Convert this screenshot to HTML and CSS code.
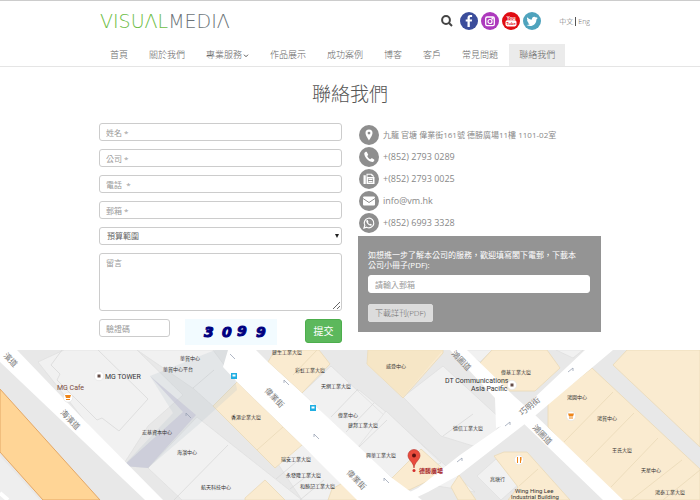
FILE: index.html
```html
<!DOCTYPE html>
<html lang="zh-Hant">
<head>
<meta charset="utf-8">
<meta name="viewport" content="width=device-width, initial-scale=1">
<title>聯絡我們</title>
<link rel="stylesheet" href="styles.css">
</head>
<body>
<header class="header">
  <div class="container topbar">
    <a class="logo" href="#" aria-label="VisualMedia"><span class="logo-green">VISUΛL</span>MEDIΛ</a>
    <div class="tools">
      <button class="search" type="button" aria-label="搜尋">
        <svg viewBox="0 0 12 12"><circle cx="5" cy="5" r="3.9"/><path d="M8 8l3 3"/></svg>
      </button>
      <div class="social">
        <a class="fb" href="#" aria-label="Facebook"><svg viewBox="0 0 18 18"><path d="M9.8 15V9.6h2l.3-2.2H9.8V6.1c0-.7.3-1 1-1h1.3V3.1c-.3 0-.9-.1-1.7-.1C8.600 3 7.500 4.100 7.500 5.800v1.600H5.700v2.200h1.800V15z"/></svg></a>
        <a class="ig" href="#" aria-label="Instagram"><svg viewBox="0 0 18 18"><rect x="4.700" y="5" width="8.600" height="8.600" rx="1.400" fill="none" stroke="#fff" stroke-width="1.300"/><circle cx="9" cy="9.500" r="2" fill="none" stroke="#fff" stroke-width="1.200"/><rect x="10.500" y="5.500" width="2" height="2"/></svg></a>
        <a class="yt" href="#" aria-label="YouTube"><svg viewBox="0 0 18 18"><text x="9" y="7.500">You</text><rect x="3.500" y="8.200" width="11" height="6.200" rx="1.800"/><text class="tube" x="9" y="13">Tube</text></svg></a>
        <a class="tw" href="#" aria-label="Twitter"><svg viewBox="0 0 18 18"><path d="M14.500 5.700l-1.100.4c.4-.3.700-.7.800-1.100l-1.300.5a2.300 2.300 0 0 0-3.900 2.100C7 7.500 5.400 6.600 4.300 5.200c-.6 1.100-.3 2.400.7 3.100l-1-.3c0 1.100.8 2 1.800 2.300l-1 .1c.3.900 1.100 1.500 2.100 1.600-.9.700-2.100 1.100-3.400 1 4.800 2.700 9.900-.3 9.900-5.500.4-.3.800-.7 1.100-1.200z"/></svg></a>
      </div>
      <div class="lang"><a href="#">中文</a><a class="eng" href="#">Eng</a></div>
    </div>
  </div>
  <nav class="container nav">
    <a href="#">首頁</a>
    <a href="#">關於我們</a>
    <a href="#">專業服務<svg class="caret" viewBox="0 0 6 4"><path d="M1 .7l2 2 2-2"/></svg></a>
    <a href="#">作品展示</a>
    <a href="#">成功案例</a>
    <a href="#">博客</a>
    <a href="#">客戶</a>
    <a href="#">常見問題</a>
    <a class="active" href="#">聯絡我們</a>
  </nav>
</header>

<main>
  <h1>聯絡我們</h1>
  <div class="container columns">
    <form class="form">
      <input class="field" type="text" placeholder="姓名 *" aria-label="姓名">
      <input class="field" type="text" placeholder="公司 *" aria-label="公司">
      <input class="field" type="tel" placeholder="電話  *" aria-label="電話">
      <input class="field" type="email" placeholder="郵箱 *" aria-label="郵箱">
      <div class="select">
        <select class="field" aria-label="預算範圍"><option>預算範圍</option></select>
      </div>
      <textarea class="field message" placeholder="留言" aria-label="留言"></textarea>
      <div class="verify">
        <input class="field code" type="text" placeholder="驗證碼" aria-label="驗證碼">
        <svg class="captcha" viewBox="0 0 92 26" role="img" aria-label="3099">
          <text x="19" y="18">3</text><text x="37" y="18">0</text><text x="52" y="17">9</text><text x="71" y="18">9</text>
        </svg>
        <button class="submit" type="submit">提交</button>
      </div>
    </form>

    <div class="info">
      <ul class="contacts">
        <li class="address"><svg viewBox="0 0 20 20"><circle cx="10" cy="10" r="10"/><path class="ink" fill-rule="evenodd" d="M10 4.500a3.500 3.500 0 0 0-3.500 3.600C6.500 10.500 10 15.500 10 15.500s3.500-5 3.500-7.400A3.500 3.500 0 0 0 10 4.500zm0 2.200a1.400 1.400 0 1 1 0 2.800 1.400 1.400 0 0 1 0-2.800z"/></svg>九龍 官塘 偉業街161號 德勝廣場11樓 1101-02室</li>
        <li><svg viewBox="0 0 20 20"><circle cx="10" cy="10" r="10"/><path class="ink" d="M6.700 4.800L5.300 6c-.4 4 4.600 9.200 8.800 9l1.200-1.500c.2-.4.100-.7-.2-.9l-2-1.300c-.3-.2-.7-.1-.9.100l-.9.900c-1.300-.5-2.600-1.900-3.100-3.200l.8-.8c.3-.3.300-.6.100-.9L7.800 5c-.3-.4-.7-.5-1.100-.2z"/></svg>+(852) 2793 0289</li>
        <li><svg viewBox="0 0 20 20"><circle cx="10" cy="10" r="10"/><path class="ink" fill-rule="evenodd" d="M4.500 6.200h2.300V15H4.500zM7.500 4.700h5.200l2 2V8h.8v7h-8zM8.500 5.700V8h5.200V7h-1.300V5.700zM9 9.500v4h5v-4z"/><path class="line" d="M9.500 10.500h4M9.500 12.500h4"/></svg>+(852) 2793 0025</li>
        <li><svg viewBox="0 0 20 20"><circle cx="10" cy="10" r="10"/><rect class="ink" x="4" y="5.500" width="12" height="9" rx="1"/><path class="fold" d="M4 7.500l6 4 6-4"/></svg>info@vm.hk</li>
        <li><svg viewBox="0 0 20 20"><circle cx="10" cy="10" r="10"/><path class="ring" d="M5 15l.8-2.700A4.800 4.800 0 1 1 7.700 14.200z"/><path class="ink" d="M8 7l-.8.800c0 2.500 2.600 5 5 4.900l.8-.9-1.500-1.100-.8.600c-.8-.3-1.400-.9-1.700-1.700l.5-.7L8.700 7z"/></svg>+(852) 6993 3328</li>
      </ul>
      <form class="brochure">
        <label for="brochure-mail">如想進一步了解本公司的服務，歡迎填寫閣下電郵，下載本<br>公司小冊子(PDF):</label>
        <input class="field" id="brochure-mail" type="email" placeholder="請輸入郵箱">
        <button class="download" type="submit">下載詳刊(PDF)</button>
      </form>
    </div>
  </div>

  <svg class="map" viewBox="0 0 700 150" role="img" aria-label="地圖">
    <rect width="700" height="150" fill="#e8e8e8"/>
    <!-- grey building plots -->
    <g fill="#f1f1f1" stroke="#dedede" stroke-width=".7">
      <path d="M64 0h73l46 45-35 31-25 39-35-40-50-63z"/>
      <path d="M137 0h76l26 35-25 22-20-18z"/>
      <path d="M148 118l49-51 105 83H182z"/>
      <path d="M330 70l29-30 27 22 89 80-82-13z"/>
      <path d="M302 43l29-27 56 52-29 29z"/>
      <path d="M358 97l28-36 55 52-39 14-10 1z"/>
      <path d="M403 47l40-31 60 55-20 28-42-13z"/>
      <path d="M276 111l25-17 60 56h-59z"/>
      <path d="M477 126l19-17 23 25-18 16z"/>
      <path d="M462 0h30l-12 12z"/><path d="M556 0h27l-10 8z"/>
    </g>
    <g fill="none" stroke="#d9d9d9" stroke-width=".8">
      <path d="M62 0L51 15l9 9-3 6 40 40 5-2 17 13 29-32-50-49M228 95l-54 55M193 38l21-18M331 67l27-28M346 82l28-29M359 97l28-27M276 129l20-17M290 139l22-17M300 150l24-20M443 86l30-22"/>
    </g>
    <!-- waterfront plot -->
    <path d="M0 39l100 111H43L0 102z" fill="#ffd596" stroke="#e4a765"/>
    <path d="M0 106l40 44H0z" fill="#eee"/><path d="M0 143l8 7" stroke="#fff" stroke-width="4"/>
    <!-- commercial plots -->
    <g fill="#faebd0" stroke="#ead9b8" stroke-width=".8">
      <path d="M237 32l-24 24 62 62 27-23z"/><path d="M257 100l26-23"/>
      <path d="M275 0h44l11 14-28 29-34-31z"/><path d="M293 25l24-25"/>
      <path d="M245 148l20-18 20 20h-40zM332 139l14-8 12 19h-30z"/>
      <path d="M368 0h75v3l-40 45-36-34z"/>
      <path d="M421 99l21 19-12 12-21 10h-18l-1-10z"/>
      <path d="M492 0h55l13 18-25 23h-33l-22-28z"/>
      <path d="M627 0h73v97l-87-82z"/>
      <path d="M548 53l44-35 108 101v31h-85l-67-73z"/>
      <path d="M564 92l49-50M586 112l48-49M611 137l47-49M631 150l51-40M663 150l37-30M494 106l10-4h23l43 48h-62l10-13zM519 136l19-17"/>
      <path d="M451 137l8-12 17 25h-18z"/>
    </g>
    <path d="M150 26l65-26h15l7 40-40 36-49 42-25-2 50-53z" fill="#b9c4cb" opacity=".24"/>
    <path d="M150 26l46 39-48 53-25-2 60-54z" fill="#c5c4d5" opacity=".65"/>
    <path d="M368 0h75l-40 47-36-32z" fill="#f3e2c0" opacity=".6"/>
    <!-- streets -->
    <g fill="#fff">
      <path d="M0 0h17l70 73 76 77h-18L0 12z"/>
      <path d="M228 0h28l12 12 34 31 90 85 30 22h-65l-55-55-65-63-14-15z"/>
      <path d="M585 0h28l-83 70-71 55-31 17-17 8h-18l25-12 42-33 36-25 20-15z"/>
      <path d="M450 0h17l48 47 17 15 91 88h-20l-83-80-24 8-1-30z"/>
    </g>
    <g class="arrows"><path d="M284 30l5 5m-5-5v3M314 84l5 5m-5-5v3M384 128l5 5m-5-5v3M457 112l5-4m0 0v3M505 76l5-4m0 0v3M568 22l5-4m0 0v3M186 63l5 5m-5-5v3M230 4l5 5"/></g>
    <g class="street">
      <text transform="translate(3 6) rotate(46)">濱道</text>
      <text transform="translate(60 63) rotate(46)">海濱道</text>
      <text transform="translate(264 41) rotate(46)">偉業街</text>
      <text transform="translate(346 123) rotate(46)">偉業街</text>
      <text transform="translate(451 4) rotate(46)">鴻圖道</text>
      <text transform="translate(532 78) rotate(46)">鴻圖道</text>
      <text transform="translate(522 66) rotate(-39)">巧明街</text>
    </g>
    <g class="places">
      <text x="180" y="10">華貿中心</text><text x="163" y="21">華貿中心平台</text>
      <text x="142" y="84">宏基資本中心</text><text x="177" y="104">海濱中心</text><text x="201" y="139">航天科技中心</text>
      <text x="272" y="4">建生工業大廈</text><text x="295" y="22">彩虹工業大廈</text><text x="321" y="38">天網工業大廈</text>
      <text x="231" y="69">香港企業大廈</text><text x="338" y="67">偉業中心</text><text x="348" y="77">建邦工業大廈</text>
      <text x="366" y="107">興華工業大廈</text><text x="281" y="111">瑞安工業大廈</text><text x="286" y="127">永發隆工業大廈</text><text x="300" y="138">和勝記工業大廈</text>
      <text x="386" y="18">威登中心</text><text x="501" y="24">偉基工業大廈</text><text x="453" y="80">德信工業大廈</text>
      <text x="567" y="49">鴻圖中心</text><text x="597" y="70">鴻貿中心</text><text x="612" y="102">王氏大廈</text><text x="641" y="122">天星中心</text><text x="655" y="144">鴻泰工業大廈</text>
      <text x="490" y="131">兆塘行</text>
      <text class="hotel" x="419" y="123">德勝廣場</text>
    </g>
    <g class="latin">
      <text x="105" y="29">MG TOWER</text><text class="cafe" x="57" y="40">MG Cafe</text>
      <text x="445" y="33">DT Communications</text><text x="471" y="41">Asia Pacific</text>
      <text class="small" x="515" y="143">Wing Hing Lee</text><text class="small" x="511" y="149">Industrial Building</text>
    </g>
    <g fill="#fff" stroke="#ddd" stroke-width=".5"><circle cx="99" cy="26" r="4.700"/><circle cx="68" cy="47.500" r="4.700"/><circle cx="512" cy="35" r="4.700"/><circle cx="571" cy="66" r="4.700"/><circle cx="519" cy="110" r="4.700"/></g>
    <path d="M97.500 24.500h3v3h-3zM510.500 33.500h3v3h-3z" fill="#654c47"/>
    <path d="M65 45h6l-1 3h-4zM66 49h4v1h-4zM568 63.500h6l-1 3h-4zM569 67.500h4v1h-4zM517 107h1v6h-1zM520 107h1.500v3.500h-.5v2.500h-1z" fill="#ee8519"/>
    <g><path d="M231 23h6v6h-6zM310 55h6v6h-6z" fill="#20aee2"/><path d="M232.500 24.500h3v2h-3zM311.500 56.500h3v2h-3z" fill="#fff"/></g>
    <path d="M414 118c-.5-6-6-8-6-12.500a6 6 0 0 1 12 0c0 4.500-5.500 6.500-6 12.500z" fill="#e94b3c" stroke="#b52f28" stroke-width=".6"/><circle cx="414" cy="105.500" r="2" fill="#5d1110"/><circle cx="414" cy="120.500" r="1.500" fill="#d42b2b"/>
  </svg>
</main>
</body>
</html>
```
FILE: styles.css
```css
* { box-sizing: border-box; }

body {
  margin: 0;
  background: #fff;
  color: #666;
  font: 400 9px/12px "Open Sans", "Noto Sans CJK TC", sans-serif;
}

a { color: inherit; text-decoration: none; }
button, input, select, textarea { font: inherit; color: inherit; margin: 0; }

.container { width: 72%; margin: 0 auto; }

.header { border-top: 1px solid #ccc; border-bottom: 1px solid #e5e5e5; }

.topbar {
  display: flex;
  align-items: center;
  justify-content: space-between;
  height: 40px;
  padding: 0 12px 0 2px;
}

.logo { color: #6b7378; font: 200 19px/24px "DejaVu Sans", sans-serif; }
.logo-green { color: #6dbd45; }

.tools { display: flex; align-items: center; }
.search { width: 12px; height: 12px; padding: 0; border: 0; background: none; }
.search svg { display: block; fill: none; stroke: #444; stroke-width: 2; }
.social { display: flex; gap: 3px; margin: 0 18px 0 7px; }
.social a { width: 18px; height: 18px; border-radius: 50%; }
.social svg { display: block; fill: #fff; }
.social text { font: 700 5px/1 "Liberation Sans", sans-serif; text-anchor: middle; }
.social .tube { font-size: 4px; fill: #e00c12; }
.fb { background: #3b4d9b; }
.ig { background: #ad39bd; }
.yt { background: #e00c12; }
.tw { background: #4fa3bd; }
.lang { display: flex; font-size: 7px; line-height: 9px; font-weight: 300; }
.eng { margin-left: 2px; padding-left: 2px; border-left: 1px solid #555; }

.nav { display: flex; gap: 1px; padding: 3px 0 0 2px; font-weight: 300; }
.nav a { padding: 0 10px; line-height: 22px; white-space: nowrap; }
.nav .active { background: #ebebeb; }
.caret { width: 6px; height: 4px; margin-left: 1px; vertical-align: middle; fill: none; stroke: #555; }

h1 {
  margin: 13px 0 15px;
  color: #555;
  font-size: 19px;
  font-weight: 300;
  line-height: 28px;
  text-align: center;
}

.columns {
  display: grid;
  grid-template-columns: 1fr 1fr;
  gap: 16px;
  padding: 0 1px;
  align-items: start;
}

.form { display: flex; flex-direction: column; gap: 8px; }

.field {
  display: block;
  width: 100%;
  height: 18px;
  padding: 0 6px;
  border: 1px solid #ccc;
  border-radius: 3px;
  background: #fff;
  font-size: 8px;
  line-height: 12px;
}
.field::placeholder { color: #999; opacity: 1; }

.select { position: relative; }
.select .field { appearance: none; padding: 0 7px; }
.select::after {
  content: "";
  position: absolute;
  right: 3px;
  top: 7px;
  border: 2px solid transparent;
  border-top: 4px solid #222;
  border-bottom: 0;
}

.message { height: 58px; padding: 3px 6px; resize: vertical; }

.verify { display: flex; gap: 15px; align-items: flex-start; height: 31px; }
.code { width: 71px; }
.captcha { width: 92px; height: 26px; background: #f2fbff; }
.captcha text {
  fill: #000080;
  stroke: #000080;
  stroke-width: 1;
  font: italic 700 14px/1 "DejaVu Sans", sans-serif;
}
.submit {
  width: 37px;
  height: 24px;
  margin-left: auto;
  padding: 0;
  border: 1px solid #4cae4c;
  border-radius: 3px;
  background: #5cb85c;
  color: #fff;
  font-size: 10px;
}

.info { padding-top: 2px; }
.contacts {
  display: grid;
  gap: 2px;
  margin: 0 0 3px;
  padding: 0 0 0 1px;
  list-style: none;
  color: #888;
}
.contacts li { display: flex; align-items: center; gap: 4px; white-space: nowrap; }
.contacts .address { font-size: 8px; }
.contacts svg { width: 20px; height: 20px; fill: #8e8e8e; }
.contacts .ink { fill: #fff; }
.contacts .line { stroke: #fff; }
.contacts .fold { fill: none; stroke: #8e8e8e; }
.contacts .ring { fill: none; stroke: #fff; stroke-width: 1.2; }

.brochure { padding: 14px 11px 10px 10px; background: #949494; }
.brochure label { display: block; color: #fff; font-size: 8px; line-height: 10px; white-space: nowrap; }
.brochure .field { margin: 5px 0 11px; border-color: #fff; }
.download {
  height: 18px;
  padding: 0 6px;
  border: 1px solid #ddd;
  border-radius: 2px;
  background: #dcdcdc;
  font-size: 8px;
  font-weight: 300;
  line-height: 12px;
}

.map { display: block; width: 100%; }
.map text { font-family: Roboto, "Noto Sans CJK TC", sans-serif; font-weight: 400; }
.street text { fill: #777; font-size: 8px; }
.places text { fill: #333; font-size: 5px; }
.places .hotel { fill: #a5222a; font-size: 6px; font-weight: 700; }
.latin text { fill: #333; font-size: 7px; }
.latin .cafe { fill: #7a4a3c; }
.latin .small { font-size: 6px; }
.arrows { fill: none; stroke: #9aa3b5; stroke-width: .8; }
```
